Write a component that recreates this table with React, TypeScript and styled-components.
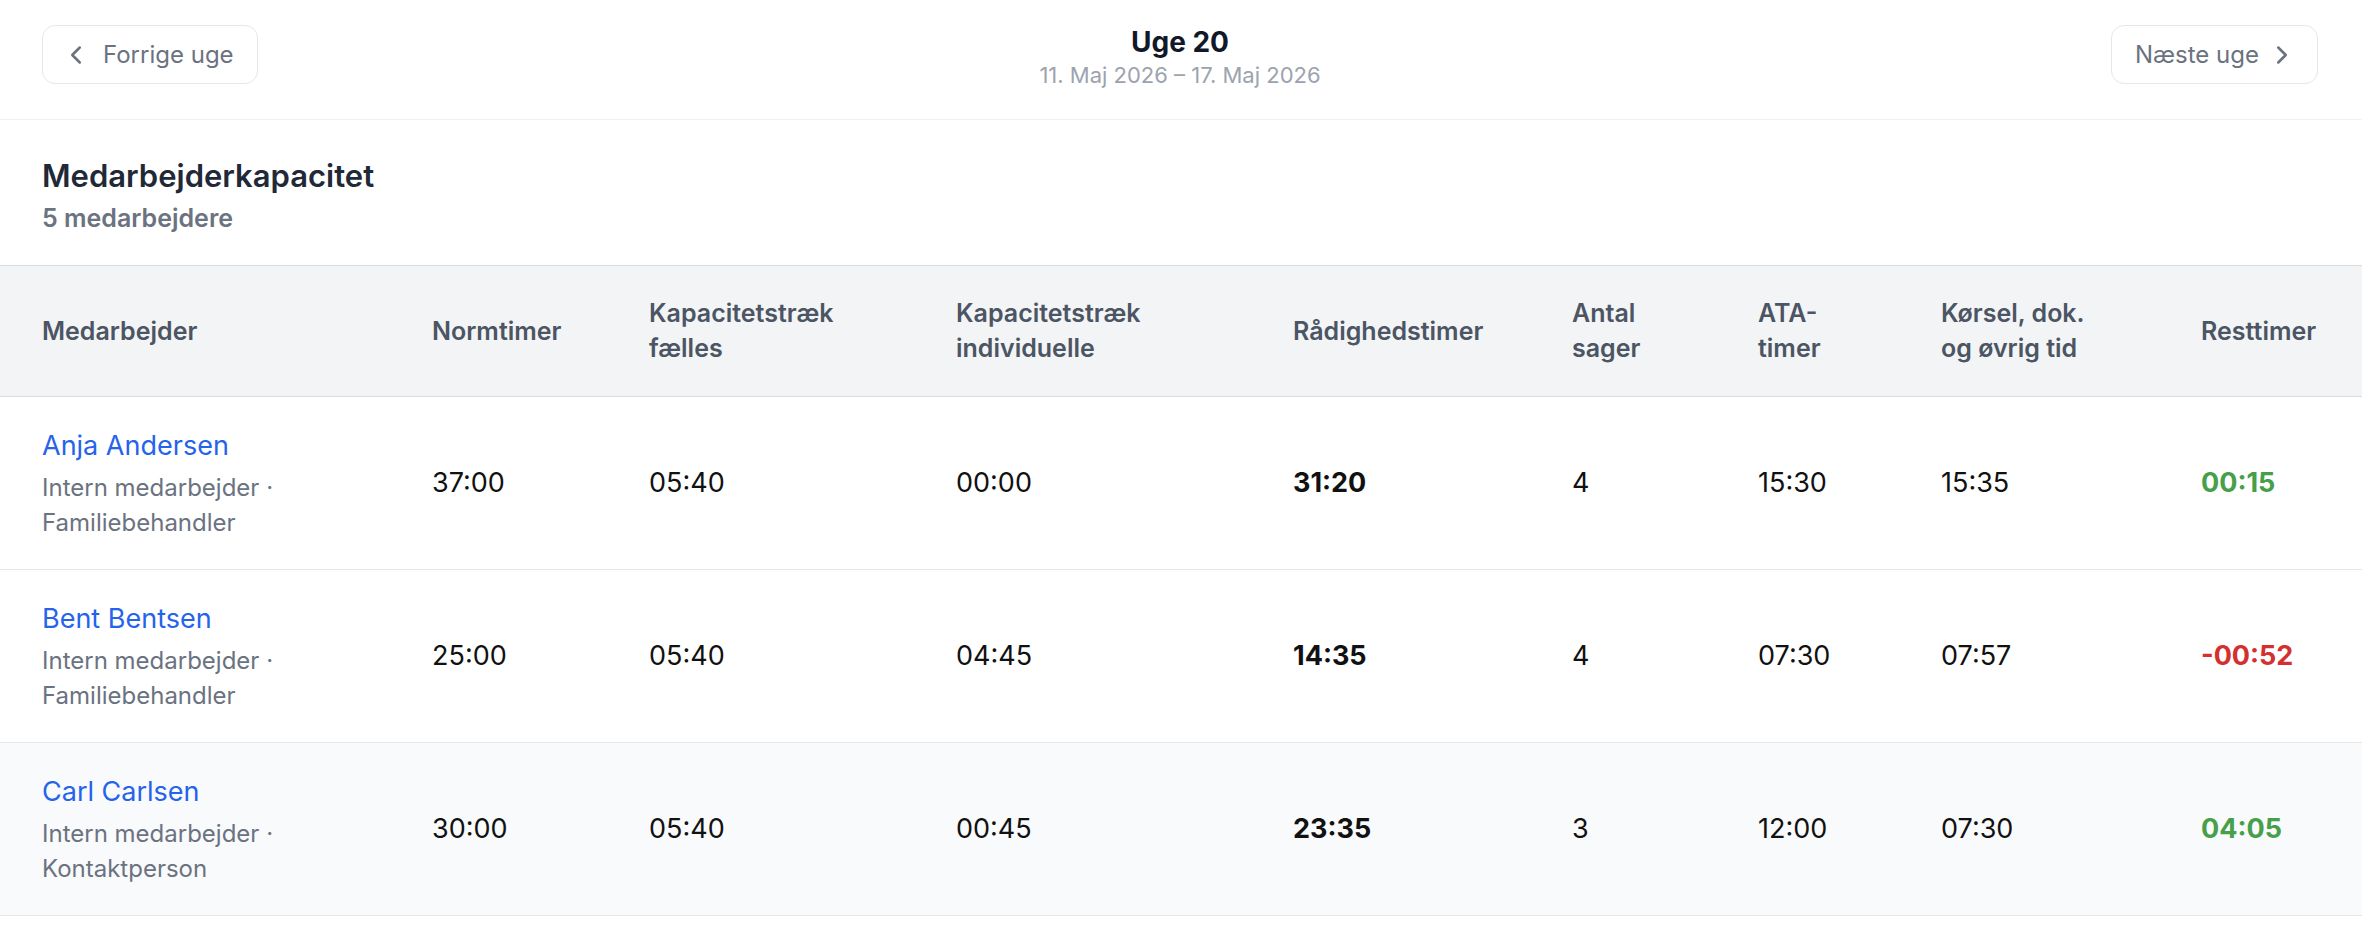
import { ChevronLeft, ChevronRight } from 'lucide-react'
import styled, { createGlobalStyle } from 'styled-components'

const GlobalStyle = createGlobalStyle`
  html, body {
    margin: 0;
    padding: 0;
    background: #ffffff;
  }
  body {
    font-family: Inter, "Noto Sans", "Liberation Sans", sans-serif;
    color: #111827;
    -webkit-font-smoothing: antialiased;
  }
  * {
    box-sizing: border-box;
  }
`

interface Column {
  key: string
  label: string[]
}

interface Employee {
  name: string
  role: string
  normtimer: string
  faelles: string
  individuelle: string
  raadighed: string
  sager: number
  ata: string
  koersel: string
  rest: string
}

// total in the team, only the first rows are visible
const EMPLOYEE_COUNT = 5

const columns: Column[] = [
  { key: 'name', label: ['Medarbejder'] },
  { key: 'normtimer', label: ['Normtimer'] },
  { key: 'faelles', label: ['Kapacitetstræk', 'fælles'] },
  { key: 'individuelle', label: ['Kapacitetstræk', 'individuelle'] },
  { key: 'raadighed', label: ['Rådighedstimer'] },
  { key: 'sager', label: ['Antal', 'sager'] },
  { key: 'ata', label: ['ATA-', 'timer'] },
  { key: 'koersel', label: ['Kørsel, dok.', 'og øvrig tid'] },
  { key: 'rest', label: ['Resttimer'] },
]

const employees: Employee[] = [
  {
    name: 'Anja Andersen',
    role: 'Intern medarbejder · Familiebehandler',
    normtimer: '37:00',
    faelles: '05:40',
    individuelle: '00:00',
    raadighed: '31:20',
    sager: 4,
    ata: '15:30',
    koersel: '15:35',
    rest: '00:15',
  },
  {
    name: 'Bent Bentsen',
    role: 'Intern medarbejder · Familiebehandler',
    normtimer: '25:00',
    faelles: '05:40',
    individuelle: '04:45',
    raadighed: '14:35',
    sager: 4,
    ata: '07:30',
    koersel: '07:57',
    rest: '-00:52',
  },
  {
    name: 'Carl Carlsen',
    role: 'Intern medarbejder · Kontaktperson',
    normtimer: '30:00',
    faelles: '05:40',
    individuelle: '00:45',
    raadighed: '23:35',
    sager: 3,
    ata: '12:00',
    koersel: '07:30',
    rest: '04:05',
  },
]

const Page = styled.div`
  width: 100%;
  min-height: 100vh;
  background: #ffffff;
`

const WeekBar = styled.header`
  display: grid;
  grid-template-columns: 1fr auto 1fr;
  align-items: start;
  padding: 24px 44px 29px 42px;
  border-bottom: 1px solid #f1f2f4;
`

const NavButton = styled.button<{ $side: 'left' | 'right' }>`
  justify-self: ${(p) => (p.$side === 'left' ? 'start' : 'end')};
  display: inline-flex;
  align-items: center;
  gap: ${(p) => (p.$side === 'left' ? '12px' : '8px')};
  height: 59px;
  margin-top: 1px;
  padding: ${(p) => (p.$side === 'left' ? '0 23px 0 18px' : '0 20px 0 23px')};
  background: #ffffff;
  border: 1px solid #e5e7eb;
  border-radius: 13px;
  color: #6b7280;
  font-family: inherit;
  font-size: 24px;
  line-height: 36px;
  cursor: pointer;

  svg {
    flex-shrink: 0;
  }
`

const WeekInfo = styled.div`
  display: flex;
  flex-direction: column;
  align-items: center;
`

const WeekTitle = styled.div`
  font-size: 28px;
  line-height: 36px;
  font-weight: 700;
  color: #111827;
`

const WeekRange = styled.div`
  font-size: 22px;
  line-height: 30px;
  color: #9ca3af;
`

const Intro = styled.div`
  padding: 35px 42px 29px;
`

const Title = styled.h2`
  margin: 0;
  font-size: 31px;
  line-height: 42px;
  font-weight: 600;
  color: #1f2937;
`

const Subtitle = styled.div`
  margin-top: 3px;
  font-size: 25px;
  line-height: 36px;
  font-weight: 600;
  color: #6b7280;
`

const Grid = styled.div`
  display: grid;
  grid-template-columns: 390px 217px 307px 337px 279px 186px 183px 260px 1fr;
  align-items: center;
  padding: 0 42px;
`

const HeadRow = styled(Grid)`
  padding-top: 30px;
  padding-bottom: 30px;
  background: #f3f4f6;
  border-top: 1px solid #d9dbdf;
  border-bottom: 1px solid #d9dbdf;
`

const HeadCell = styled.div`
  padding-right: 12px;
  font-size: 25px;
  line-height: 35px;
  font-weight: 600;
  color: #4b5563;
`

const BodyRow = styled(Grid)<{ $highlighted?: boolean }>`
  padding-top: 29px;
  padding-bottom: 29px;
  background: ${(p) => (p.$highlighted ? '#f9fafb' : '#ffffff')};
  border-bottom: 1px solid #e5e7eb;
`

const PersonCell = styled.div`
  padding-right: 24px;
`

const PersonName = styled.a`
  display: block;
  font-size: 27px;
  line-height: 40px;
  color: #2563eb;
  text-decoration: none;
`

const PersonRole = styled.div`
  margin-top: 4px;
  font-size: 24px;
  line-height: 35px;
  color: #6b7280;
`

const Value = styled.div<{ $strong?: boolean; $tone?: 'positive' | 'negative' }>`
  font-size: 27px;
  line-height: 40px;
  font-weight: ${(p) => (p.$strong || p.$tone ? 700 : 400)};
  color: ${(p) =>
    p.$tone === 'positive' ? '#45a049' : p.$tone === 'negative' ? '#d3302f' : '#111111'};
`

export default function App() {
  return (
    <Page>
      <GlobalStyle />
      <WeekBar>
        <NavButton $side="left">
          <ChevronLeft size={30} strokeWidth={2} />
          Forrige uge
        </NavButton>
        <WeekInfo>
          <WeekTitle>Uge 20</WeekTitle>
          <WeekRange>11. Maj 2026 – 17. Maj 2026</WeekRange>
        </WeekInfo>
        <NavButton $side="right">
          Næste uge
          <ChevronRight size={30} strokeWidth={2} />
        </NavButton>
      </WeekBar>

      <Intro>
        <Title>Medarbejderkapacitet</Title>
        <Subtitle>{EMPLOYEE_COUNT} medarbejdere</Subtitle>
      </Intro>

      <HeadRow>
        {columns.map((col) => (
          <HeadCell key={col.key}>
            {col.label.map((line, i) => (
              <span key={line}>
                {i > 0 && <br />}
                {line}
              </span>
            ))}
          </HeadCell>
        ))}
      </HeadRow>

      {employees.map((emp, idx) => (
        <BodyRow
          key={emp.name}
          $highlighted={idx === 2}
        >
          <PersonCell>
            <PersonName href="#">{emp.name}</PersonName>
            <PersonRole>{emp.role}</PersonRole>
          </PersonCell>
          <Value>{emp.normtimer}</Value>
          <Value>{emp.faelles}</Value>
          <Value>{emp.individuelle}</Value>
          <Value $strong>{emp.raadighed}</Value>
          <Value>{emp.sager}</Value>
          <Value>{emp.ata}</Value>
          <Value>{emp.koersel}</Value>
          <Value $tone={emp.rest.startsWith('-') ? 'negative' : 'positive'}>
            {emp.rest}
          </Value>
        </BodyRow>
      ))}
    </Page>
  )
}
